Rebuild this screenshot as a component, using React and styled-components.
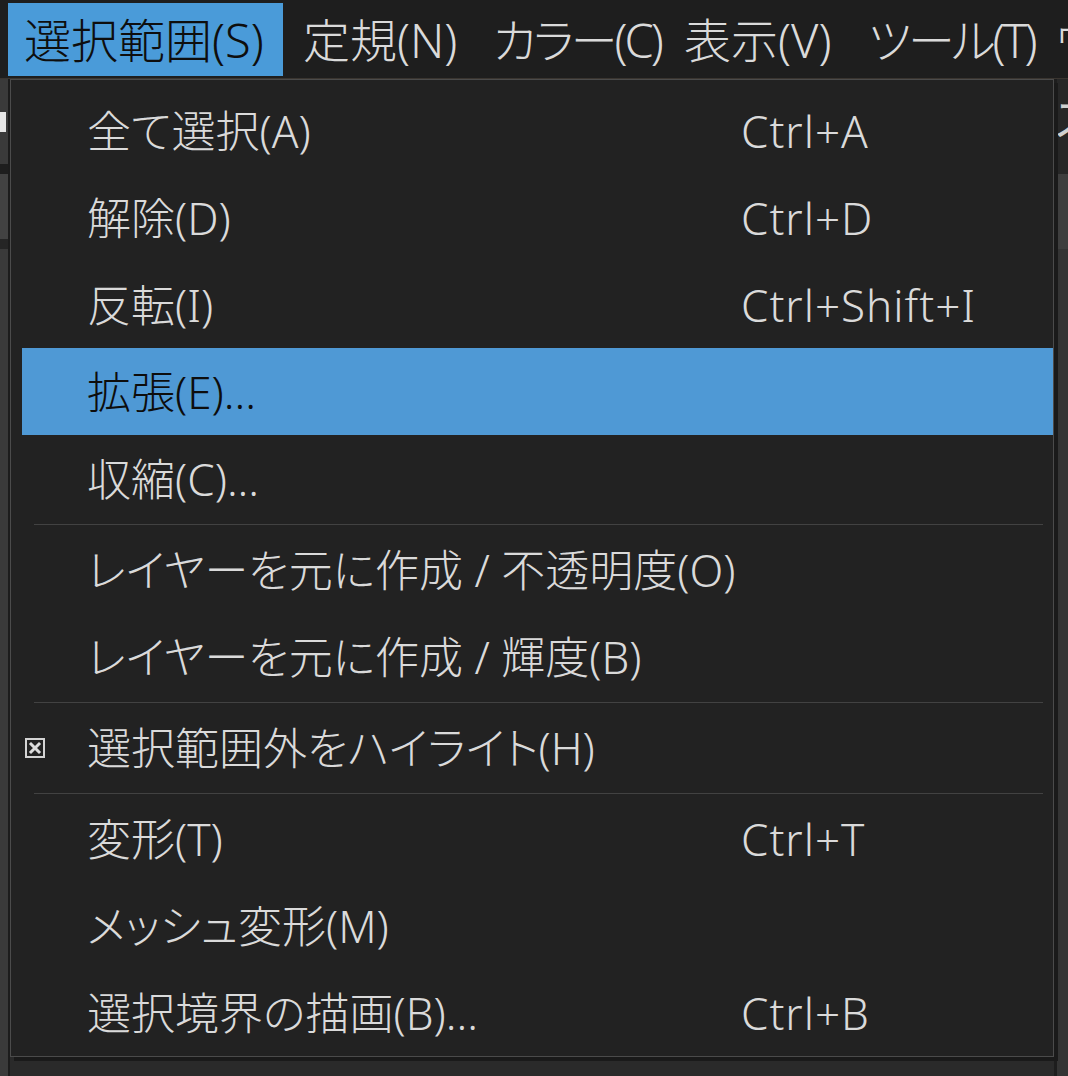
import React from "react";
import styled, { createGlobalStyle } from "styled-components";

const GlobalStyle = createGlobalStyle`
  html, body {
    margin: 0;
    padding: 0;
    background: #3b3b3b;
  }
  body {
    font-family: "Noto Sans", "Noto Sans CJK JP", sans-serif;
    font-feature-settings: "palt";
  }
`;

const titles = [
  { label: "選択範囲(S)", width: 275, active: true },
  { label: "定規(N)", width: 186 },
  { label: "カラー(C)", width: 187, tight: true },
  { label: "表示(V)", width: 180 },
  { label: "ツール(T)", width: 183, tight: true },
  { label: "ウィンドウ(W)" },
];

const items = [
  { label: "全て選択(A)", shortcut: "Ctrl+A" },
  { label: "解除(D)", shortcut: "Ctrl+D" },
  { label: "反転(I)", shortcut: "Ctrl+Shift+I" },
  { label: "拡張(E)...", active: true },
  { label: "収縮(C)..." },
  { separator: true },
  { label: "レイヤーを元に作成 / 不透明度(O)" },
  { label: "レイヤーを元に作成 / 輝度(B)" },
  { separator: true },
  { label: "選択範囲外をハイライト(H)", checked: true },
  { separator: true },
  { label: "変形(T)", shortcut: "Ctrl+T" },
  { label: "メッシュ変形(M)" },
  { label: "選択境界の描画(B)...", shortcut: "Ctrl+B" },
];

const CheckMark = () => (
  <svg width="20" height="20" viewBox="0 0 20 20">
    <rect x="1" y="1" width="18" height="18" fill="none" stroke="#d4d4d4" strokeWidth="2" />
    <path d="M6 6 L14 14 M14 6 L6 14" stroke="#dcdcdc" strokeWidth="3" strokeLinecap="square" />
  </svg>
);

const App = () => {
  return (
    <>
      <GlobalStyle />
      <Screen>
        <MenuBar>
          {titles.map((t) => (
            <MenuTitle key={t.label} $active={t.active} $w={t.width} $tight={t.tight}>
              {t.label}
            </MenuTitle>
          ))}
        </MenuBar>
        <Workspace>
          <LeftDock>
            <DockBlock $h={85} $bg="#3a3a3a">
              <DockTab />
            </DockBlock>
            <DockBlock $h={10} $bg="#1e1e1e" />
            <DockBlock $h={65} $bg="#424242" />
            <DockBlock $h={10} $bg="#252525" />
            <DockBlock $grow $bg="#3a3a3a" />
          </LeftDock>
          <Center />
          <RightDock>
            <DockBlock $h={95} $bg="#272727">
              <DockGlyph>ス</DockGlyph>
            </DockBlock>
            <DockBlock $h={75} $bg="#3e3e3e" />
            <DockBlock $grow $bg="#343434" />
          </RightDock>
          <Dropdown>
            {items.map((item, i) =>
              item.separator ? (
                <Separator key={i} />
              ) : (
                <Item key={i} $active={item.active}>
                  <CheckCell>{item.checked && <CheckMark />}</CheckCell>
                  <Label>{item.label}</Label>
                  <Shortcut>{item.shortcut}</Shortcut>
                </Item>
              )
            )}
          </Dropdown>
        </Workspace>
      </Screen>
    </>
  );
};

export default App;

const Screen = styled.div`
  width: 1068px;
  height: 1076px;
  display: flex;
  flex-direction: column;
  overflow: hidden;
  background: #3b3b3b;
`;

const MenuBar = styled.div`
  height: 79px;
  flex-shrink: 0;
  display: flex;
  align-items: center;
  gap: 4px;
  padding-left: 8px;
  background: #1e1e1e;
  overflow: hidden;
  box-sizing: border-box;
  border-bottom: 1px solid #3a3530;
`;

const MenuTitle = styled.div`
  width: ${(p) => (p.$w ? `${p.$w}px` : "auto")};
  height: 73px;
  padding: 0 0 3px 16px;
  box-sizing: border-box;
  display: flex;
  align-items: center;
  flex-shrink: 0;
  white-space: nowrap;
  font-size: 47px;
  font-weight: 300;
  letter-spacing: ${(p) => (p.$tight ? "-3px" : "0")};
  color: ${(p) => (p.$active ? "#0e0e0e" : "#dadada")};
  background: ${(p) => (p.$active ? "#4a9bd9" : "transparent")};
`;

const Workspace = styled.div`
  flex: 1;
  display: flex;
  position: relative;
`;

const LeftDock = styled.div`
  width: 8px;
  display: flex;
  flex-direction: column;
  border-right: 2px solid #1c1c1c;
`;

const RightDock = styled.div`
  width: 11px;
  display: flex;
  flex-direction: column;
  border-left: 3px solid #1d1d1d;
  overflow: hidden;
`;

const DockBlock = styled.div`
  height: ${(p) => (p.$grow ? "auto" : `${p.$h}px`)};
  flex: ${(p) => (p.$grow ? 1 : "none")};
  background: ${(p) => p.$bg};
  position: relative;
  overflow: hidden;
`;

const DockTab = styled.div`
  margin-top: 33px;
  width: 6px;
  height: 20px;
  background: #e6e6e6;
`;

const DockGlyph = styled.div`
  margin-top: 18px;
  margin-left: -2px;
  font-size: 44px;
  line-height: 1;
  color: #d0d0d0;
`;

const Center = styled.div`
  flex: 1;
  background: #2a2a2a;
`;

const Dropdown = styled.div`
  position: absolute;
  top: 0;
  left: 10px;
  width: 1044px;
  box-sizing: border-box;
  padding: 7px 0 0 11px;
  background: #222222;
  border: 1px solid #4b4b4b;
  box-shadow: 4px 4px 0 #1a1a1a;
`;

const Item = styled.div`
  height: 87px;
  display: grid;
  grid-template-columns: 65px 654px 1fr;
  align-items: center;
  white-space: nowrap;
  font-size: 44px;
  font-weight: 300;
  color: ${(p) => (p.$active ? "#0d0d0d" : "#dadada")};
  background: ${(p) => (p.$active ? "#4f99d5" : "transparent")};
`;

const CheckCell = styled.div`
  display: flex;
  align-items: center;
  padding-left: 3px;
`;

const Label = styled.span`
  line-height: 1;
`;

const Shortcut = styled.span`
  line-height: 1;
  letter-spacing: 1px;
`;

const Separator = styled.div`
  height: 1px;
  margin: 2px 10px 1px 12px;
  background: #424242;
`;
